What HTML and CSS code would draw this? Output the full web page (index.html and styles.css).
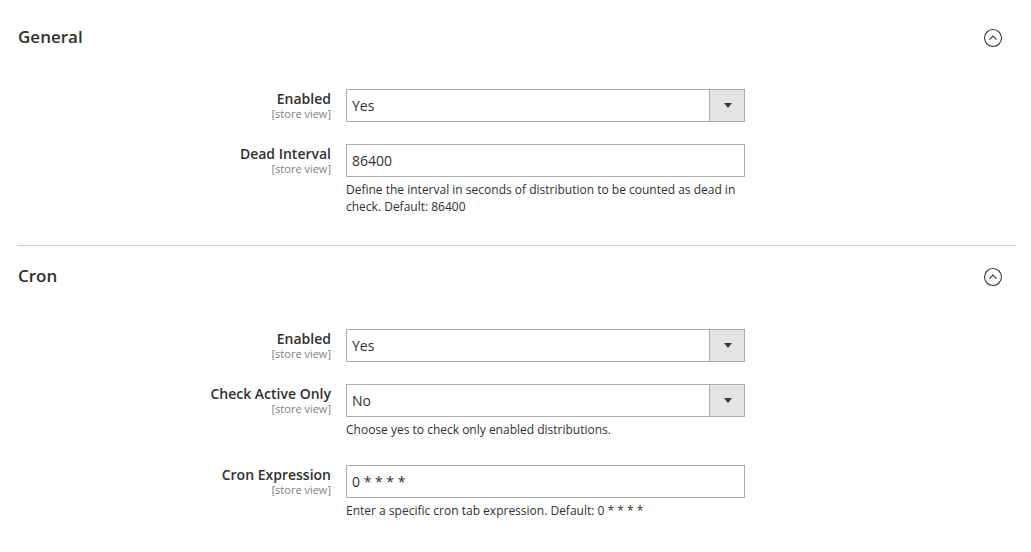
FILE: index.html
```html
<!DOCTYPE html>
<html>
<head>
<meta charset="utf-8">
<link rel="stylesheet" href="styles.css">
</head>
<body>
<div class="page">
  <section class="section">
    <div class="section-head">
      <h2 class="section-title">General</h2>
      <svg class="toggle" width="20" height="20" viewBox="0 0 20 20"><circle cx="10" cy="10" r="8.5" fill="none" stroke="#41362f" stroke-width="1.1"/><path d="M6.4 11.6 L10 8 L13.6 11.6" fill="none" stroke="#41362f" stroke-width="1.2"/></svg>
    </div>
    <div class="fields">
      <div class="field">
        <div class="label"><span class="label-text">Enabled</span><span class="scope">[store view]</span></div>
        <div class="control">
          <div class="select"><span class="select-value">Yes</span><span class="select-btn"><span class="arrow"></span></span></div>
        </div>
      </div>
      <div class="field">
        <div class="label"><span class="label-text">Dead Interval</span><span class="scope">[store view]</span></div>
        <div class="control">
          <input class="input" type="text" value="86400">
          <p class="note">Define the interval in seconds of distribution to be counted as dead in check. Default: 86400</p>
        </div>
      </div>
    </div>
  </section>
  <section class="section section-bordered">
    <div class="section-head">
      <h2 class="section-title">Cron</h2>
      <svg class="toggle" width="20" height="20" viewBox="0 0 20 20"><circle cx="10" cy="10" r="8.5" fill="none" stroke="#41362f" stroke-width="1.1"/><path d="M6.4 11.6 L10 8 L13.6 11.6" fill="none" stroke="#41362f" stroke-width="1.2"/></svg>
    </div>
    <div class="fields">
      <div class="field">
        <div class="label"><span class="label-text">Enabled</span><span class="scope">[store view]</span></div>
        <div class="control">
          <div class="select"><span class="select-value">Yes</span><span class="select-btn"><span class="arrow"></span></span></div>
        </div>
      </div>
      <div class="field">
        <div class="label"><span class="label-text">Check Active Only</span><span class="scope">[store view]</span></div>
        <div class="control">
          <div class="select"><span class="select-value">No</span><span class="select-btn"><span class="arrow"></span></span></div>
          <p class="note">Choose yes to check only enabled distributions.</p>
        </div>
      </div>
      <div class="field">
        <div class="label"><span class="label-text">Cron Expression</span><span class="scope">[store view]</span></div>
        <div class="control">
          <input class="input" type="text" value="0 * * * *">
          <p class="note">Enter a specific cron tab expression. Default: 0 * * * *</p>
        </div>
      </div>
    </div>
  </section>
</div>
</body>
</html>
```

FILE: styles.css
```css
* { box-sizing: border-box; }
html, body { margin: 0; padding: 0; background: #fff; }
body {
  font-family: "Open Sans", "Liberation Sans", sans-serif;
  color: #303030;
}
.page {
  padding: 7px 15px 0 17px;
}
.section-bordered {
  border-top: 1px solid #cccccc;
}
.section {
  padding-bottom: 3px;
}
.section-head {
  display: flex;
  justify-content: space-between;
  align-items: center;
  padding-top: 20px;
  height: 40px;
}
.section-title {
  margin: 0 0 0 1px;
  font-size: 17px;
  line-height: 20px;
  font-weight: 600;
  color: #303030;
}
.toggle {
  display: block;
  margin-right: 13px;
  margin-top: 1px;
}
.fields {
  padding-top: 42px;
}
.section-bordered .fields {
  padding-top: 43px;
}
.field {
  display: grid;
  grid-template-columns: 314px 399px;
  column-gap: 15px;
  margin-bottom: 22px;
}
.label {
  display: flex;
  flex-direction: column;
  align-items: flex-end;
  text-align: right;
  padding-top: 1px;
}
.label-text {
  font-size: 14px;
  line-height: 17px;
  font-weight: 600;
  color: #303030;
}
.scope {
  font-size: 11px;
  line-height: 13px;
  color: #808080;
}
.select {
  display: flex;
  height: 33px;
  border: 1px solid #adadad;
  background: #fff;
}
.select-value {
  flex: 1;
  padding-left: 5px;
  font-size: 14px;
  line-height: 31px;
  color: #303030;
}
.select-btn {
  width: 35px;
  border-left: 1px solid #adadad;
  background: #e3e3e3;
  display: flex;
  align-items: center;
  justify-content: center;
}
.arrow {
  width: 0;
  height: 0;
  border-left: 4px solid transparent;
  border-right: 4px solid transparent;
  border-top: 5px solid #41362f;
  margin-left: 1px;
}
.input {
  display: block;
  width: 399px;
  height: 33px;
  border: 1px solid #adadad;
  padding: 0 5px;
  margin: 0;
  font-family: "Open Sans", "Liberation Sans", sans-serif;
  font-size: 14px;
  color: #303030;
  outline: none;
}
.note {
  margin: 4px 0 5px 0;
  font-size: 12px;
  line-height: 17px;
  color: #303030;
}
```
